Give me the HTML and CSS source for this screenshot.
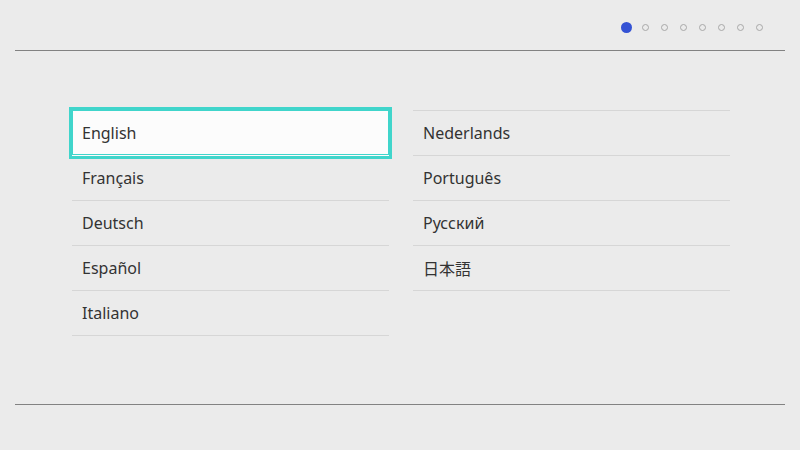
FILE: index.html
```html
<!DOCTYPE html>
<html lang="en">
<head>
  <meta charset="UTF-8" />
  <meta name="viewport" content="width=device-width, initial-scale=1.0" />
  <title>Language</title>
  <link rel="stylesheet" href="styles.css">
</head>
<body>
  <div class="screen">
    <header class="top">
      <div class="dots">
        <span class="dot active"></span>
        <span class="dot"></span>
        <span class="dot"></span>
        <span class="dot"></span>
        <span class="dot"></span>
        <span class="dot"></span>
        <span class="dot"></span>
        <span class="dot"></span>
      </div>
    </header>

    <main class="langs">
      <ul class="list">
        <li class="item selected">English</li>
        <li class="item">Français</li>
        <li class="item">Deutsch</li>
        <li class="item">Español</li>
        <li class="item">Italiano</li>
      </ul>
      <ul class="list">
        <li class="item">Nederlands</li>
        <li class="item">Português</li>
        <li class="item">Русский</li>
        <li class="item" lang="ja">日本語</li>
      </ul>
    </main>

    <footer class="bottom"></footer>
  </div>
</body>
</html>
```

FILE: styles.css
```css
body {
  margin: 0;
  background-color: #ebebeb;
  font-family: "Noto Sans", "Noto Sans CJK JP", sans-serif;
  color: #333;
}

.screen {
  width: 800px;
  height: 450px;
  display: flex;
  flex-direction: column;
}

.top {
  height: 50px;
  margin: 0 15px;
  border-bottom: 1px solid #828282;
  display: flex;
  justify-content: flex-end;
  align-items: center;
  padding-right: 22px;
}

.dots {
  display: flex;
  align-items: center;
  gap: 12px;
  margin-top: 4px;
}

.dot {
  box-sizing: border-box;
  width: 7px;
  height: 7px;
  border: 1.5px solid #a8a8a8;
  border-radius: 50%;
}

.dot.active {
  width: 11px;
  height: 11px;
  border: none;
  background-color: #3452d4;
  margin-right: -2px;
}

.langs {
  flex: 1;
  display: flex;
  gap: 24px;
  padding: 59px 0 0 72px;
}

.list {
  list-style: none;
  margin: 0;
  padding: 0;
  width: 317px;
  border-top: 1px solid #d6d6d6;
}

.item {
  height: 44px;
  border-bottom: 1px solid #d6d6d6;
  display: flex;
  align-items: center;
  padding-left: 10px;
  font-size: 16px;
}

.item.selected {
  position: relative;
  background-color: #fcfcfc;
  box-shadow: 0 0 0 3px #40d5cb, inset 0 0 0 1px #40d5cb;
  border-bottom-color: transparent;
  margin-top: -1px;
  height: 45px;
}

.bottom {
  height: 45px;
  margin: 0 15px;
  border-top: 1px solid #828282;
}
```
